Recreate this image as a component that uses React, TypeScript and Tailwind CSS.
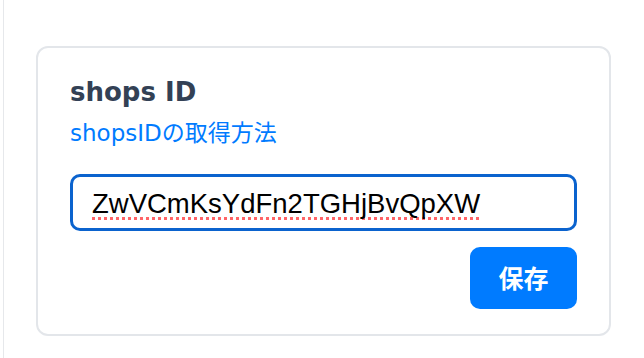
import { useState } from 'react'

export default function App() {
  const [shopId, setShopId] = useState('ZwVCmKsYdFn2TGHjBvQpXW')

  return (
    <div className="min-h-[358px] w-full bg-white pl-[3px]">
      <div className="min-h-[358px] border-l border-[#e6e8eb] pl-[32px] pt-[46px]">
        <div className="w-[575px] rounded-[12px] border-2 border-[#e3e6ea] bg-white px-8 pb-[25px] pt-[29px]">
          <h2
            className="text-[26px] font-bold leading-[30px] text-[#334155]"
            style={{ fontFamily: '"DejaVu Sans", "Noto Sans CJK JP", sans-serif' }}
          >
            shops ID
          </h2>
          <a
            href="#"
            className="mt-[11px] block text-[23px] leading-[30px] text-[#007bff]"
            style={{ fontFamily: '"DejaVu Sans", "Noto Sans CJK JP", sans-serif' }}
          >
            shopsIDの取得方法
          </a>
          <input
            type="text"
            value={shopId}
            onChange={(e) => setShopId(e.target.value)}
            className="mt-[26px] block h-[57px] w-full rounded-[10px] border-[3px] border-[#0b63ce] bg-white px-[19px] pt-[3px] text-[27.5px] text-black underline decoration-red-400 decoration-dotted decoration-3 underline-offset-[4px] outline-none [text-decoration-skip-ink:none]"
            style={{ fontFamily: '"Liberation Sans", Arial, sans-serif' }}
          />
          <div className="mt-[16px] flex justify-end">
            <button
              className="h-[62px] w-[107px] rounded-[10px] bg-[#007bff] text-[25px] font-bold text-white"
              style={{ fontFamily: '"Noto Sans CJK JP", sans-serif' }}
            >
              保存
            </button>
          </div>
        </div>
      </div>
    </div>
  )
}
